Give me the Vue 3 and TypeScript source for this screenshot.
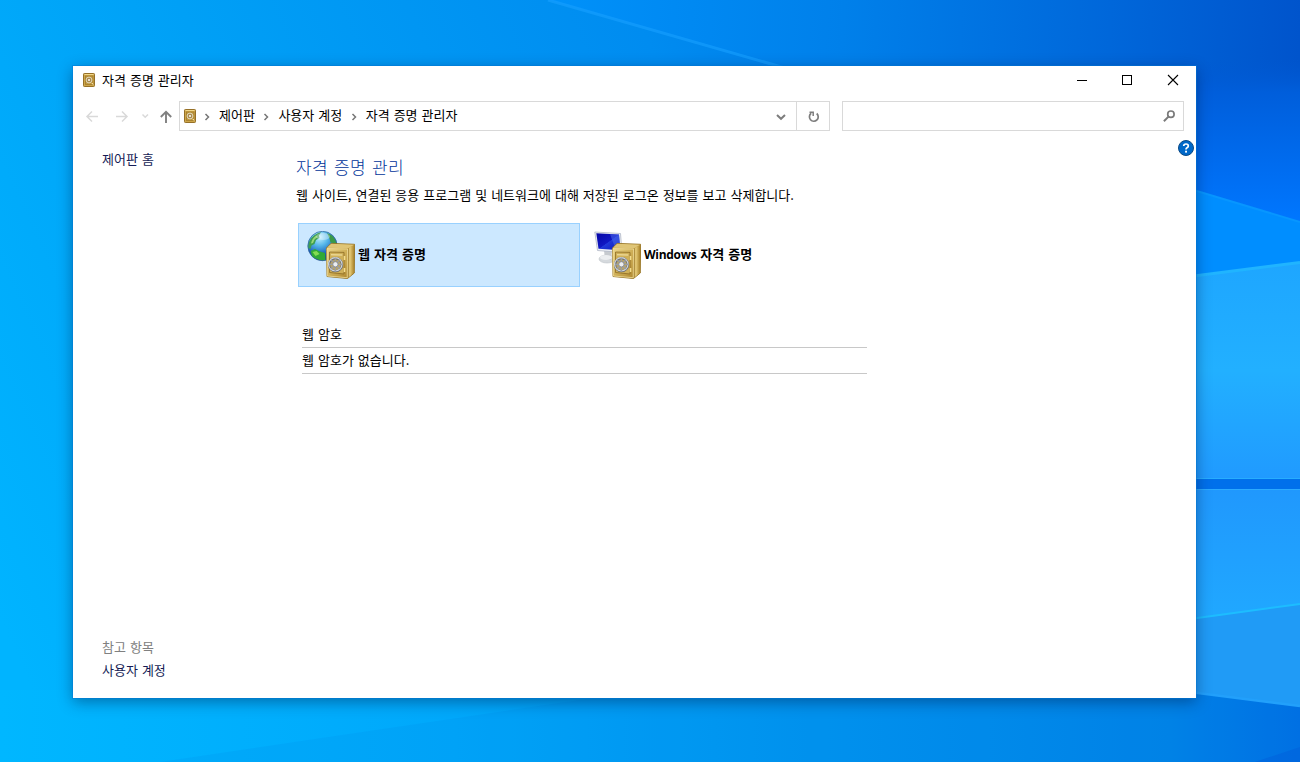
<script setup lang="ts">
interface Credential {
  id: string
  latin: string
  label: string
  selected: boolean
}

const crumbs: string[] = ['제어판', '사용자 계정', '자격 증명 관리자']

const credentials: Credential[] = [
  { id: 'web', latin: '', label: '웹 자격 증명', selected: true },
  { id: 'windows', latin: 'Windows', label: '자격 증명', selected: false },
]
</script>

<template>
  <div class="desktop">
    <svg class="wallpaper" viewBox="0 0 1300 762" width="1300" height="762" aria-hidden="true">
      <defs>
        <linearGradient id="base" gradientUnits="userSpaceOnUse" x1="0" y1="620" x2="1260" y2="60">
          <stop offset="0" stop-color="#00b4ff" />
          <stop offset=".3" stop-color="#00a0f6" />
          <stop offset=".6" stop-color="#008cf0" />
          <stop offset=".82" stop-color="#006fe2" />
          <stop offset="1" stop-color="#0056d0" />
        </linearGradient>
        <linearGradient id="topBand" gradientUnits="userSpaceOnUse" x1="540" y1="0" x2="1300" y2="40">
          <stop offset="0" stop-color="#0092fa" />
          <stop offset=".4" stop-color="#0080ea" />
          <stop offset=".75" stop-color="#0067da" />
          <stop offset="1" stop-color="#0054cc" />
        </linearGradient>
        <linearGradient id="rightTop" x1="0" y1="0" x2="0" y2="1">
          <stop offset="0" stop-color="#0058d2" stop-opacity="0" />
          <stop offset=".2" stop-color="#005edb" />
          <stop offset="1" stop-color="#0077ff" />
        </linearGradient>
        <linearGradient id="pane" x1="0" y1="0" x2="0" y2="1">
          <stop offset="0" stop-color="#1ea6ff" />
          <stop offset=".5" stop-color="#22b0ff" />
          <stop offset="1" stop-color="#209aff" />
        </linearGradient>
        <linearGradient id="paneLow" x1="0" y1="0" x2="0" y2="1">
          <stop offset="0" stop-color="#2098fd" />
          <stop offset="1" stop-color="#20a8ff" />
        </linearGradient>
        <linearGradient id="bottom" x1="0" y1="0" x2="1" y2="0">
          <stop offset="0" stop-color="#00b7ff" />
          <stop offset=".35" stop-color="#00a8fb" />
          <stop offset=".65" stop-color="#0093ef" />
          <stop offset=".9" stop-color="#0083e8" />
          <stop offset="1" stop-color="#006fe4" />
        </linearGradient>
      </defs>
      <rect width="1300" height="762" fill="url(#base)" />
      <path d="M548 0H1300V190H1100L780 66Z" fill="url(#topBand)" />
      <path d="M548 0L785 68" stroke="#17a0ff" stroke-width="3" fill="none" opacity=".6" />
      <path d="M1190 60H1300V222L1190 189Z" fill="url(#rightTop)" />
      <path d="M73 690H1300V762H0V690Z" fill="url(#bottom)" />
      <path d="M160 762L620 694H1300V762Z" fill="#0078dc" opacity=".12" />
      <path d="M1190 189L1300 222V262L1190 276Z" fill="#008eff" />
      <path d="M1190 189L1300 222" stroke="#0796ff" stroke-width="2" />
      <path d="M1190 276L1300 262V479H1190Z" fill="url(#pane)" />
      <path d="M1190 276.500L1300 262.500" stroke="#20b4ff" stroke-width="3" />
      <path d="M1190 478.500H1300" stroke="#27adff" stroke-width="1" />
      <path d="M1190 479H1300V489H1190Z" fill="#0070eb" />
      <path d="M1190 489H1300V604L1190 619Z" fill="url(#paneLow)" />
      <path d="M1190 489.500H1300" stroke="#2baaff" stroke-width="1" />
      <path d="M1190 619L1300 604V706L1190 692Z" fill="#209bf6" />
      <path d="M1190 619L1300 604" stroke="#1dbdff" stroke-width="2" />
      <path d="M1190 692L1300 706" stroke="#22a0fb" stroke-width="2.500" />
      <path d="M1255 762L1300 747V762Z" fill="#0060dc" opacity=".5" />
    </svg>

    <svg class="symbols" width="0" height="0" aria-hidden="true">
      <defs>
        <linearGradient id="gold" x1="0" y1="0" x2="1" y2="1">
          <stop offset="0" stop-color="#ecd78c" />
          <stop offset=".5" stop-color="#d0b058" />
          <stop offset="1" stop-color="#b08931" />
        </linearGradient>
        <linearGradient id="goldSide" x1="0" y1="0" x2="1" y2="0">
          <stop offset="0" stop-color="#8f6c20" />
          <stop offset=".3" stop-color="#e9cf7c" />
          <stop offset="1" stop-color="#a88128" />
        </linearGradient>
        <radialGradient id="ocean" cx=".4" cy=".2" r=".85">
          <stop offset="0" stop-color="#c4f1ff" />
          <stop offset=".35" stop-color="#52b4e8" />
          <stop offset=".7" stop-color="#1a5bb5" />
          <stop offset="1" stop-color="#123a86" />
        </radialGradient>
        <linearGradient id="screen" x1="0" y1="0" x2="1" y2="1">
          <stop offset="0" stop-color="#0505a4" />
          <stop offset=".5" stop-color="#1018c4" />
          <stop offset=".52" stop-color="#2038d8" />
          <stop offset="1" stop-color="#0c18b8" />
        </linearGradient>
        <symbol id="safe" viewBox="0 0 48 48">
          <path d="M19.500 17L24 12.400L47.600 13.300L47.300 42L40.500 47.500L20 45.500Z" fill="#c5a149" stroke="#94701f" stroke-width=".9" stroke-linejoin="round" />
          <path d="M20 16.700L24.300 12.800L47 13.700L41 17.300Z" fill="#dfc577" />
          <path d="M41 17.500L47.200 14L46.900 41.700L40.800 47Z" fill="url(#goldSide)" />
          <path d="M20 17.500L40.500 18L40.200 46.700L20.300 45Z" fill="url(#gold)" stroke="#f5e5a8" stroke-width=".7" />
          <path d="M22.500 21L37 21.400V43L22.500 41.500Z" fill="#cfb058" stroke="#8d6b23" stroke-width=".8" />
          <path d="M24 23.800L35.300 24" stroke="#f8e8ac" stroke-width="1" />
          <path d="M37.500 25v4M37.500 37v4" stroke="#f4dd8d" stroke-width="1.600" />
          <circle cx="28.500" cy="33.700" r="6.500" fill="#b9a468" stroke="#686b70" stroke-width="2.300" />
          <circle cx="28.300" cy="33.300" r="6.700" fill="none" stroke="#d2d6da" stroke-width="1.200" />
          <path d="M28.400 26.500V40M22 33.300H35M24 28.800L33 38M33 28.800L24 38" stroke="#9a9ea4" stroke-width="1.300" />
          <circle cx="28.400" cy="33.300" r="2.600" fill="#eceef0" stroke="#777b82" stroke-width=".7" />
        </symbol>
        <symbol id="safe-small" viewBox="0 0 14 16">
          <rect x="1.500" y="1.500" width="11" height="13" rx=".8" fill="#cda64a" stroke="#967027" />
          <path d="M2.500 2.500H11.500" stroke="#f2d88b" />
          <rect x="3.500" y="4" width="7.500" height="8.500" fill="#c19b43" stroke="#a37c2c" stroke-width=".8" />
          <circle cx="7" cy="8" r="2.900" fill="#a98a4c" stroke="#e2d8bc" />
          <circle cx="7" cy="8" r="1" fill="#fff" />
          <path d="M10 11l1 1.500" stroke="#fff0bd" />
        </symbol>
      </defs>
    </svg>

    <main class="window">
      <header class="titlebar">
        <svg class="app-icon" width="14" height="16"><use href="#safe-small" /></svg>
        <span class="window-title">자격 증명 관리자</span>
        <div class="controls">
          <svg width="45" height="28" viewBox="0 0 45 28" fill="none" stroke="#000"><path d="M17 14.500H27" /></svg>
          <svg width="45" height="28" viewBox="0 0 45 28" fill="none" stroke="#000"><rect x="17.500" y="9.500" width="9" height="9" /></svg>
          <svg width="46" height="28" viewBox="0 0 46 28" fill="none" stroke="#000"><path d="M18 9L28 19M28 9L18 19" stroke-width="1.100" /></svg>
        </div>
      </header>

      <nav class="toolbar">
        <div class="history">
          <svg width="106" height="30" viewBox="0 0 106 30" fill="none">
            <g stroke="#d9d9d9" stroke-width="1.500">
              <path d="M25 15.500H14M19 10.500L14 15.500L19 20.500" />
              <path d="M43 15.500H54M49 10.500L54 15.500L49 20.500" />
              <path d="M69.500 13.500L72.200 16.200L75 13.500" />
            </g>
            <path d="M93 22V10.800M87.800 16L93 10.800L98.200 16" stroke="#808080" stroke-width="1.900" />
          </svg>
        </div>
        <div class="address">
          <svg class="address-icon" width="14" height="16"><use href="#safe-small" /></svg>
          <template v-for="crumb in crumbs" :key="crumb">
            <svg class="separator" width="6" height="8" viewBox="0 0 6 8" fill="none"><path d="M1.500 1L4.500 4L1.500 7" stroke="#777" stroke-width="1.500" /></svg>
            <span class="crumb">{{ crumb }}</span>
          </template>
          <svg class="dropdown" width="30" height="28" viewBox="0 0 30 28" fill="none"><path d="M11 13L15 16.800L19 13" stroke="#7d7d7d" stroke-width="2" /></svg>
          <div class="refresh">
            <svg width="32" height="28" viewBox="0 0 32 28" fill="none" stroke="#7d7d7d" stroke-width="1.700">
              <path d="M19.700 11.500A4.400 4.400 0 1 1 14.200 11.300" />
              <path d="M12.500 10.200H16.200V14" stroke-width="1.500" />
            </svg>
          </div>
        </div>
        <div class="search">
          <svg width="14" height="14" viewBox="0 0 14 14" fill="none" stroke="#7a7a7a">
            <circle cx="8.900" cy="5.200" r="3.200" stroke-width="1.700" />
            <path d="M6.500 7.600L1.900 12.200" stroke-width="2" />
          </svg>
        </div>
      </nav>

      <div class="body">
        <aside class="sidebar">
          <a class="link home">제어판 홈</a>
          <div class="related">
            <span class="related-title">참고 항목</span>
            <a class="link">사용자 계정</a>
          </div>
        </aside>

        <section class="content">
          <h1>자격 증명 관리</h1>
          <p class="description">웹 사이트, 연결된 응용 프로그램 및 네트워크에 대해 저장된 로그온 정보를 보고 삭제합니다.</p>

          <div class="options">
            <div v-for="item in credentials" :key="item.id" class="option" :class="{ selected: item.selected }">
              <svg width="48" height="48" viewBox="0 0 48 48">
                <g v-if="item.id === 'web'">
                  <circle cx="15.500" cy="15" r="14.700" fill="url(#ocean)" stroke="#31649a" stroke-width=".7" />
                  <path d="M7 4.500Q10 2 14 1.200L12 4.500L12.500 7L9 9L7.500 13L4.500 14.500L3.500 18L1.300 17Q1 9 7 4.500Z" fill="#3f9e50" />
                  <path d="M9 4.500L10.500 6L7.500 8.500L6 12L4 12.500Q5 7.500 9 4.500Z" fill="#9ad877" />
                  <path d="M20 2L25 4.500Q29.500 9 29.800 15L26.500 12L23.500 11.500L22.500 7.500Z" fill="#3a9a48" />
                  <path d="M3.500 20L8 18L13 20.500L18 22L18.500 29Q10 30 5 25Z" fill="#30a937" />
                  <path d="M5.500 21L9.500 20L12.500 23L8.500 25Z" fill="#83dc52" />
                  <ellipse cx="16" cy="5.500" rx="7" ry="3.500" fill="#fff" opacity=".35" />
                </g>
                <g v-else>
                  <ellipse cx="14" cy="28" rx="8" ry="4" fill="#d5d9dd" stroke="#bfc4ca" stroke-width=".6" />
                  <path d="M11 19L19 20L18 29H12Z" fill="#c6cacf" />
                  <ellipse cx="13" cy="26.500" rx="6" ry="2.400" fill="#eceef0" />
                  <path d="M1.800 1L27.500 2.500L29 21.500L4.500 19.500Z" fill="#edf0f5" stroke="#b0b6c5" stroke-width=".8" stroke-linejoin="round" />
                  <path d="M3.300 2.300L26 3.600L27.500 19.300L5.500 17.700Z" fill="url(#screen)" />
                  <path d="M17 3.200L26 3.600L27.500 19.300L23 19Z" fill="#4d70ed" opacity=".5" />
                </g>
                <use href="#safe" width="48" height="48" />
              </svg>
              <span class="option-label"><span v-if="item.latin" class="latin">{{ item.latin }}</span>{{ item.label }}</span>
            </div>
          </div>

          <div class="list">
            <div class="row">웹 암호</div>
            <div class="row">웹 암호가 없습니다.</div>
          </div>
        </section>

        <svg class="help" width="16" height="16" viewBox="0 0 16 16">
          <circle cx="8" cy="8" r="7.500" fill="#0068c9" stroke="#0b4a85" />
          <path d="M5.700 6Q5.800 4 8 4Q10.300 4 10.300 5.900Q10.300 7 9 7.700Q8 8.300 8 9.500" fill="none" stroke="#fff" stroke-width="1.700" />
          <rect x="7.100" y="10.700" width="1.900" height="1.900" fill="#fff" />
        </svg>
      </div>
    </main>
  </div>
</template>

<style>
body {
  margin: 0;
  overflow: hidden;
}
</style>

<style scoped>
.desktop {
  position: relative;
  box-sizing: border-box;
  width: 1300px;
  height: 762px;
  padding: 66px 104px 64px 73px;
  overflow: hidden;
  background: #0098f4;
  color: #000;
  font-family: "Noto Sans CJK KR", sans-serif;
  font-size: 13px;
  line-height: 20px;
  word-spacing: 1.1px;
  white-space: nowrap;
}

.wallpaper,
.symbols {
  position: absolute;
  inset: 0;
}

svg {
  display: block;
  flex: none;
}

.window {
  position: relative;
  display: flex;
  flex-direction: column;
  width: 1123px;
  height: 632px;
  background: #fff;
  box-shadow: 0 0 0 1px rgba(0, 120, 215, 0.45), 0 4px 14px rgba(0, 20, 60, 0.42);
}

.titlebar {
  display: flex;
  align-items: center;
  height: 28px;
  padding-left: 9px;
}

.window-title {
  margin-left: 6px;
}

.controls {
  display: flex;
  margin-left: auto;
}

.toolbar {
  display: flex;
  height: 30px;
  margin-top: 7px;
  padding-right: 12px;
}

.address {
  display: flex;
  align-items: center;
  box-sizing: border-box;
  width: 651px;
  border: 1px solid #d9d9d9;
}

.address-icon {
  margin-left: 3px;
}

.separator {
  margin: 2px 9px 0 7px;
}

.crumb {
  margin-right: 1.5px;
  padding-bottom: 2px;
}

.dropdown {
  margin-left: auto;
}

.refresh {
  border-left: 1px solid #d9d9d9;
}

.search {
  display: flex;
  flex: 1;
  align-items: center;
  justify-content: flex-end;
  box-sizing: border-box;
  margin-left: 12px;
  padding-right: 7px;
  border: 1px solid #d9d9d9;
}

.body {
  display: flex;
  flex: 1;
}

.sidebar {
  display: flex;
  flex-direction: column;
  width: 194px;
  padding: 18px 0 18px 29px;
}

.link {
  color: #151c55;
}

.related {
  display: flex;
  flex-direction: column;
  gap: 3px;
  margin-top: auto;
}

.related-title {
  color: #808080;
}

.content {
  flex: 1;
  padding-top: 23px;
}

h1 {
  margin: 0;
  color: #003399;
  font-size: 17px;
  font-weight: 300;
  line-height: 26px;
  letter-spacing: 0.45px;
  word-spacing: 1.6px;
}

.description {
  margin: 5px 0 0;
}

.options {
  display: flex;
  gap: 4px;
  margin: 18px 0 0 2px;
}

.option {
  display: flex;
  align-items: center;
  box-sizing: border-box;
  width: 282px;
  height: 64px;
  padding-left: 8px;
  border: 1px solid transparent;
}

.option.selected {
  border-color: #99d1ff;
  background: #cce8ff;
}

.option-label {
  margin-left: 3px;
  padding-bottom: 2px;
  font-weight: 700;
}

.latin {
  margin-right: 4px;
  font-family: "Open Sans", sans-serif;
  font-size: 12px;
  font-weight: 700;
  letter-spacing: -0.3px;
}

.list {
  width: 565px;
  margin: 35px 0 0 6px;
}

.row {
  box-sizing: border-box;
  height: 26px;
  padding-top: 2px;
  border-bottom: 1px solid #c8c8c8;
}

.help {
  margin: 9px 2px 0 0;
}
</style>
